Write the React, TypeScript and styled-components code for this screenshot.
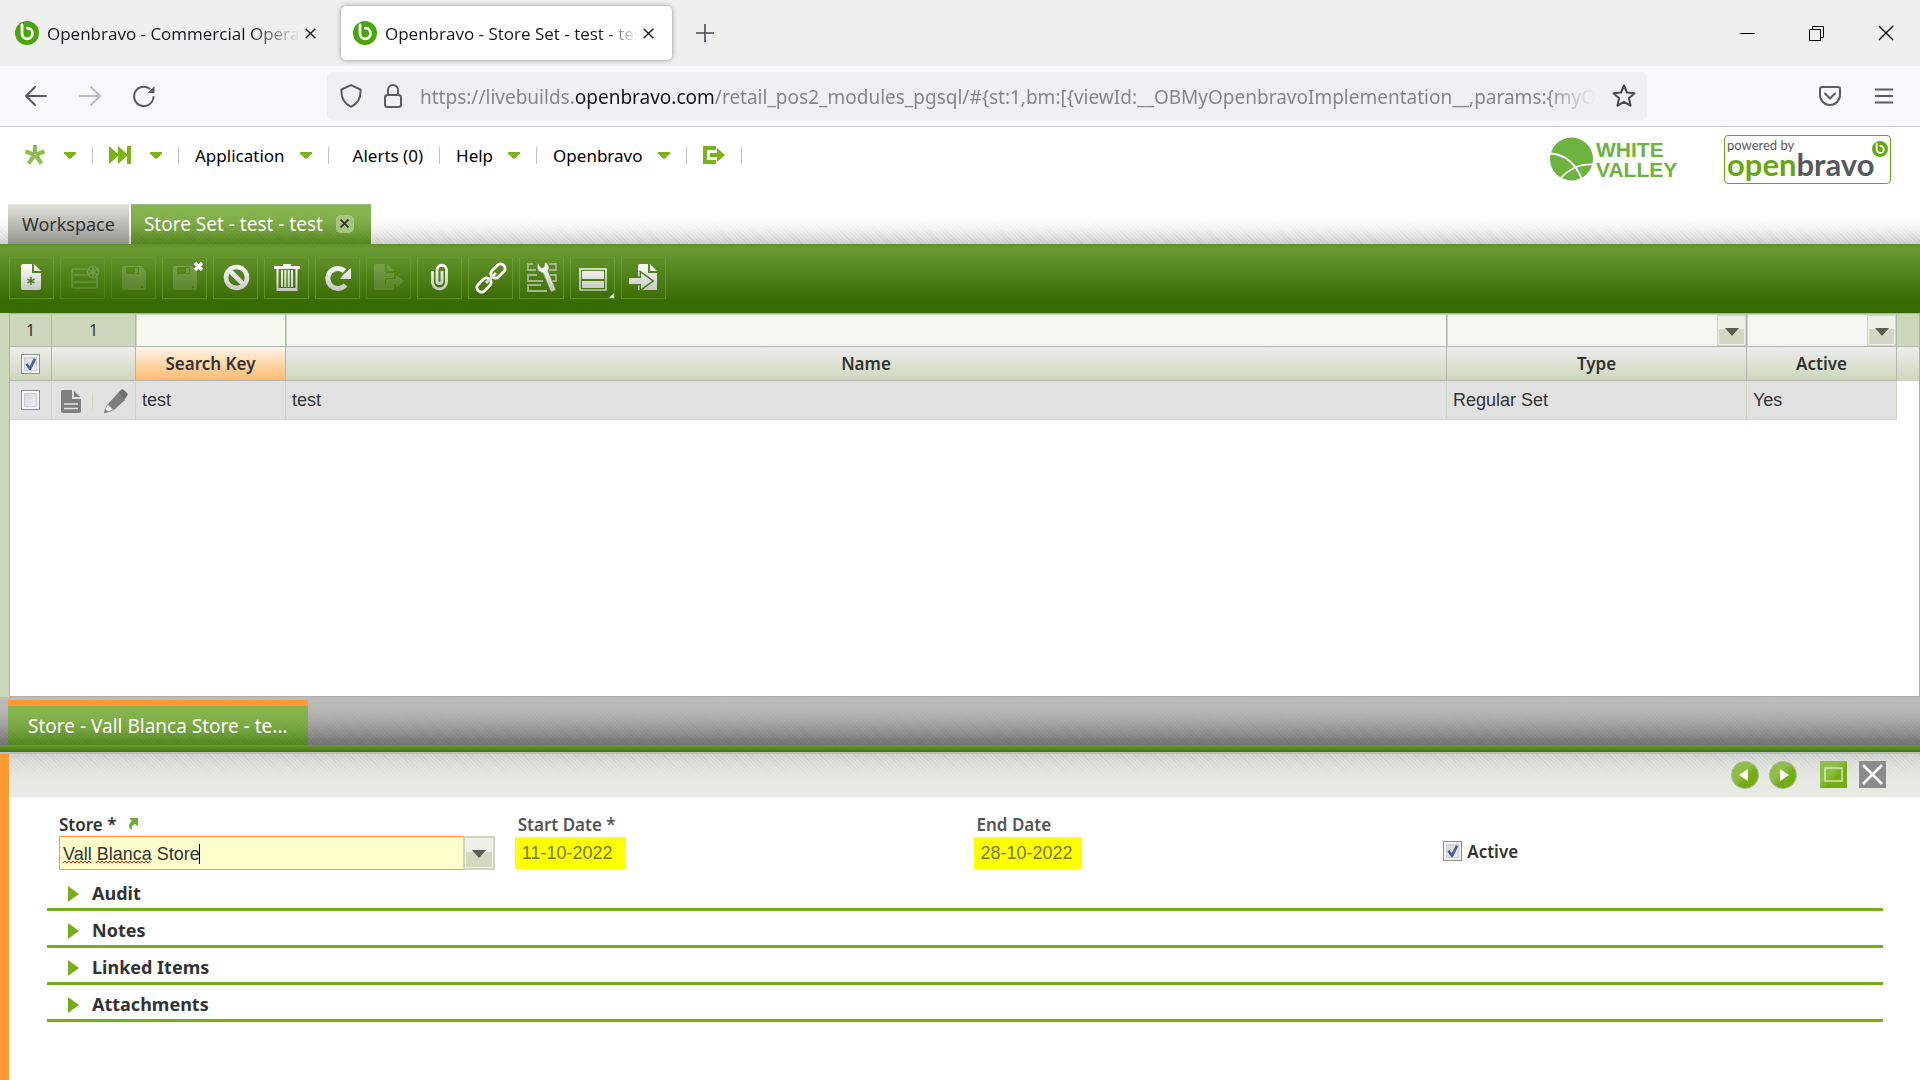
import React from 'react';
import styled, { createGlobalStyle, css } from 'styled-components';

const ui = `"Noto Sans", "Open Sans", sans-serif`;
const chrome = `"Open Sans", "Noto Sans", sans-serif`;
const arial = `"Liberation Sans", Arial, sans-serif`;

const GlobalStyle = createGlobalStyle`
  *, *::before, *::after { box-sizing: border-box; }
  html, body { margin: 0; background: #fff; }
  body { font-family: ${ui}; font-size: 16px; color: #333; }
  button, input { font: inherit; color: inherit; }
  button { border: 0; padding: 0; background: none; cursor: pointer; }
  svg { display: block; flex: none; }
`;

const Page = styled.div`
  display: flex;
  flex-direction: column;
  min-height: 100vh;
`;

/* ---------- browser window ---------- */

const TabStrip = styled.header`
  display: flex;
  align-items: center;
  height: 66px;
  padding-left: 3px;
  background: #efefef;
  font-family: ${chrome};
  font-size: 17px;
  color: #15141a;
`;

const BrowserTab = styled.div<{ $active?: boolean }>`
  display: flex;
  align-items: center;
  width: 331px;
  height: 54px;
  margin-right: 7px;
  padding: 0 18px 0 12px;
  border-radius: 5px;
  ${(p) => p.$active && css`
    background: #fff;
    box-shadow: 0 0 5px rgba(0, 0, 0, 0.4);
  `}
`;

const TabTitle = styled.span<{ $fade: number }>`
  flex: 1;
  min-width: 0;
  margin: 0 4px 0 8px;
  overflow: hidden;
  white-space: nowrap;
  mask-image: linear-gradient(to left, transparent, #000 ${(p) => p.$fade}px);
`;

const IconButton = styled.button`
  display: flex;
  align-items: center;
  justify-content: center;
`;

const PlainButton = styled(IconButton)`
  width: 54px;
  height: 48px;
`;

const NewTabButton = styled(IconButton)`
  width: 52px;
  height: 48px;
`;

const WindowControls = styled.div`
  display: flex;
  margin-left: auto;
`;

const WindowButton = styled(IconButton)`
  width: 69px;
  height: 66px;
`;

const NavBar = styled.nav`
  display: flex;
  align-items: center;
  height: 61px;
  padding: 0 9px;
  background: #f9f9fb;
  border-bottom: 1px solid #ccccd1;
`;

const UrlBar = styled.div`
  display: flex;
  align-items: center;
  flex: 1;
  gap: 16px;
  min-width: 0;
  height: 48px;
  margin: 0 156px;
  padding: 0 11px 0 13px;
  border-radius: 5px;
  background: #f0f0f4;
`;

const SiteIcons = styled.div`
  display: flex;
  gap: 22px;
`;

const UrlText = styled.div`
  flex: 1;
  min-width: 0;
  padding: 2px 0 0 2px;
  overflow: hidden;
  white-space: nowrap;
  font-family: ${ui};
  font-size: 19px;
  line-height: 28px;
  color: #87868c;
  mask-image: linear-gradient(to left, transparent, #000 50px);
  b { font-weight: 400; color: #15141a; }
`;

/* ---------- application header ---------- */

const AppHeader = styled.header`
  display: flex;
  justify-content: space-between;
  height: 77px;
  padding: 8px 29px 0 25px;
`;

const MenuRow = styled.nav`
  display: flex;
  align-items: center;
  gap: 16px;
  height: 40px;
  font-size: 17px;
  color: #000;
`;

const Sep = styled.i`
  width: 1px;
  height: 17px;
  background: #c2c2c2;
`;

const MenuButton = styled.button<{ $indent?: boolean; $icon?: boolean }>`
  display: flex;
  align-items: center;
  gap: ${(p) => (p.$icon ? 19 : 15)}px;
  margin-left: ${(p) => (p.$indent ? 8 : 0)}px;
  white-space: nowrap;
`;

const Logos = styled.div`
  display: flex;
  gap: 48px;
`;

const WhiteValley = styled.div`
  display: flex;
  gap: 3px;
  padding-top: 2px;
  color: #6cb33f;
  font-family: ${arial};
  font-size: 21px;
  font-weight: 700;
  line-height: 20px;
`;

const ValleyWords = styled.div`
  padding-top: 3px;
  width: 80px;
`;

const PoweredBox = styled.div`
  position: relative;
  width: 167px;
  height: 49px;
  padding-left: 2px;
  border: 1px solid #66a80f;
  border-radius: 4px;
  white-space: nowrap;
`;

const PoweredBy = styled.div`
  font-family: Lato, sans-serif;
  font-size: 13px;
  line-height: 18px;
  color: #55595c;
`;

const Wordmark = styled.div`
  font-family: Lato, sans-serif;
  font-size: 31px;
  font-weight: 700;
  line-height: 20px;
  color: #55595c;
  span { color: #66a80f; }
`;

const BadgeSpot = styled.div`
  position: absolute;
  top: 5px;
  right: 2px;
`;

const hatch = 'repeating-linear-gradient(45deg, rgba(0,0,0,0.05) 0 1px, transparent 1px 3px)';

const ViewTabs = styled.div`
  display: flex;
  gap: 2px;
  height: 40px;
  padding-left: 8px;
  background:
    linear-gradient(#fff 25%, rgba(255, 255, 255, 0) 100%),
    ${hatch},
    linear-gradient(#fff 30%, #cfcfcf);
`;

const ViewTab = styled.button<{ $active?: boolean }>`
  display: flex;
  align-items: center;
  gap: 13px;
  padding: 0 14px 2px;
  font-size: 18px;
  line-height: 24px;
  white-space: nowrap;
  color: ${(p) => (p.$active ? '#fff' : '#333')};
  background: ${(p) => p.$active
    ? `linear-gradient(#87b650, rgba(135,182,80,0) 90%), ${hatch}, linear-gradient(#87b650, #588a24)`
    : 'linear-gradient(#dfe1da, #93968e)'};
  border-top: 1px solid ${(p) => (p.$active ? '#9dbb7c' : '#e7e9e2')};
  ${(p) => p.$active && css`
    padding: 0 17px 2px 13px;
    font-size: 19px;
  `}
`;

const TabClose = styled.span`
  display: flex;
  align-items: center;
  justify-content: center;
  width: 18px;
  height: 18px;
  border-radius: 5px;
  background: #a3c77c;
`;

const Toolbar = styled.div`
  display: flex;
  gap: 6px;
  height: 69px;
  padding: 13px 9px;
  background: linear-gradient(#5d8f28 0, #6a9b33 4px, #376a00 58px, #376a00);
`;

const ToolButton = styled.button`
  width: 45px;
  height: 42px;
  border: 1px solid rgba(125, 175, 70, 0.5);
  border-top-color: rgba(125, 175, 70, 0.2);
  &:disabled { border-color: rgba(125, 175, 70, 0.28); }
  svg { margin: -1px; }
`;

/* ---------- grid ---------- */

const GridArea = styled.section`
  display: flex;
  flex: 1;
  min-height: 200px;
  padding-left: 9px;
  background: #cdd7bb;
`;

const GridFrame = styled.div`
  flex: 1;
  min-width: 0;
  background: #fff;
  border: 1px solid #aeb0aa;
`;

const Table = styled.table`
  width: 100%;
  table-layout: fixed;
  border-collapse: separate;
  border-spacing: 0;
  td, th { padding: 0; }
`;

const FilterRow = styled.tr`
  height: 33px;
  background: #cdd7bb;
  td {
    border-right: 1px solid #b3b5b0;
    border-bottom: 1px solid #b3b5b0;
    text-align: center;
    font-size: 16px;
  }
  td:last-child { border-right: 0; }
`;

const FilterCell = styled.div`
  display: flex;
  height: 32px;
  padding: 1px 0 0 1px;
`;

const FilterInput = styled.input`
  flex: 1;
  min-width: 0;
  border: 0;
  padding: 0 5px;
  background: #f5f8f0;
  font-family: ${arial};
  font-size: 18px;
`;

const Picker = styled.button<{ $large?: boolean }>`
  display: flex;
  align-items: center;
  justify-content: center;
  flex: none;
  width: ${(p) => (p.$large ? 32 : 29)}px;
  padding-top: 2px;
  border: ${(p) => (p.$large ? 2 : 1)}px solid #cdd7bb;
  box-shadow: inset 0 0 0 1px #eef1e7;
  background: linear-gradient(#eff1e9 45%, #d3d9c1 45%, #d3d9c1);
`;

const HeadRow = styled.tr`
  height: 34px;
  background: linear-gradient(#ededec, #cdd7bb);
  th {
    border-right: 1px solid #b3b5b0;
    border-bottom: 1px solid #b3b5b0;
    font-size: 17px;
    font-weight: 600;
    line-height: 24px;
  }
  th:last-child { border-right: 0; border-bottom: 0; }
`;

const SortedTh = styled.th`
  background: linear-gradient(#fff5ea, #ffba6e);
`;

const DataRow = styled.tr`
  height: 39px;
  font-family: ${arial};
  font-size: 18px;
  td {
    background: #e1e1e1;
    border-right: 1px solid #cdd7bb;
    border-bottom: 1px solid #cdd7bb;
    padding-left: 6px;
  }
  td:nth-child(-n + 2) { padding-left: 0; }
  td:last-child { background: #fff; border: 0; }
`;

const RowActions = styled.div`
  display: flex;
  align-items: center;
  gap: 11px;
  padding: 2px 0 0 9px;
`;

const RowSep = styled.i`
  width: 1px;
  height: 16px;
  background: #cdd7bb;
`;

const tick = `url("data:image/svg+xml,%3Csvg xmlns='http://www.w3.org/2000/svg' viewBox='0 0 19 19'%3E%3Cpath d='M5.500 9l3.500 5 5-10' fill='none' stroke='%234a5e9e' stroke-width='2.600'/%3E%3C/svg%3E")`;

const Check = styled.input.attrs({ type: 'checkbox' })`
  appearance: none;
  display: block;
  width: 19px;
  height: 20px;
  margin: 0;
  border: 1px solid #8e8f8f;
  box-shadow: inset 0 0 0 2px #f4f4f4, inset 0 0 0 3px #cbcfd5;
  background: linear-gradient(135deg, #ccd0d6, #f6f6f6);
  &:checked { background: ${tick} center / 19px no-repeat, linear-gradient(135deg, #ccd0d6, #f6f6f6); }
`;

const CheckSpot = styled.div`
  display: flex;
  justify-content: center;
`;

/* ---------- detail pane ---------- */

const ChildTabs = styled.div`
  display: flex;
  height: 48px;
  padding: 3px 0 0 8px;
  background:
    linear-gradient(#bcbcbb, rgba(188, 188, 187, 0) 90%),
    ${hatch},
    linear-gradient(#bcbcbb, #777);
`;

const ChildTab = styled.button`
  width: 300px;
  padding: 0 20px;
  border-top: 6px solid #ff9933;
  text-align: left;
  font-size: 19px;
  line-height: 24px;
  white-space: nowrap;
  color: #fff;
  background:
    linear-gradient(#87b650, rgba(135, 182, 80, 0) 90%),
    ${hatch},
    linear-gradient(#87b650, #588a24);
`;

const GreenRule = styled.div`
  height: 9px;
  background: linear-gradient(#6a9b33, #44760f);
  border-bottom: 2px solid #bcbfc0;
`;

const Detail = styled.section`
  min-height: 326px;
  border-left: 9px solid #ff9933;
`;

const DetailBar = styled.div`
  display: flex;
  align-items: center;
  justify-content: flex-end;
  height: 43px;
  padding: 0 34px 2px 0;
  gap: 12px;
  background:
    linear-gradient(rgba(231, 234, 227, 0), #e7eae3 70%),
    ${hatch},
    linear-gradient(#d2d5d1, #e7eae3 60%);
`;

const RoundPair = styled.div`
  display: flex;
  gap: 10px;
  margin-right: 11px;
`;

const Fields = styled.form`
  display: grid;
  grid-template-columns: repeat(4, 1fr);
  height: 77px;
  padding: 15px 26px 0 50px;
`;

const Field = styled.div`
  display: flex;
  flex-direction: column;
`;

const Label = styled.label<{ $muted?: boolean }>`
  display: flex;
  align-items: center;
  gap: 12px;
  height: 24px;
  font-size: 17px;
  font-weight: 600;
  color: ${(p) => (p.$muted ? '#555' : '#333')};
`;

const Combo = styled.div`
  position: relative;
  display: flex;
  width: 436px;
  height: 34px;
`;

const ComboInput = styled.input`
  flex: 1;
  min-width: 0;
  padding: 2px 3px 0;
  border: 1px solid #ff9933;
  border-right: 0;
  outline: 0;
  background: #ffffcc;
  font-family: ${arial};
  font-size: 18px;
`;

const SpellMarks = styled.svg`
  position: absolute;
  left: 0;
  top: 0;
  pointer-events: none;
`;

const DateInput = styled.input<{ $w: number }>`
  width: ${(p) => p.$w}px;
  height: 32px;
  margin: 1px 0 0 -3px;
  padding: 0 0 0 7px;
  border: 0;
  background: #ffff00;
  font-family: ${arial};
  font-size: 18px;
  color: #7a7a12;
`;

const CheckLabel = styled.label`
  display: flex;
  align-items: center;
  gap: 5px;
  height: 24px;
  margin: 27px 0 0 8px;
  font-size: 17px;
  font-weight: 600;
`;

const Sections = styled.div`
  padding: 0 37px 0 38px;
`;

const SectionButton = styled.button`
  display: flex;
  align-items: center;
  gap: 12px;
  width: 100%;
  height: 37px;
  padding: 4px 0 0 21px;
  border-bottom: 3px solid #76ad18;
  font-size: 18px;
  font-weight: 700;
  line-height: 24px;
`;

/* ---------- drawings ---------- */

const Favicon = ({ size = 24, color = '#4aa50a' }: { size?: number; color?: string }) => (
  <svg width={size} height={size} viewBox="0 0 24 24">
    <circle cx="12" cy="12" r="12" fill={color} />
    <path d="M7 4v8.500a5.300 5.300 0 1 0 5.500-5.300" fill="none" stroke="#fff" strokeWidth="2.800" strokeLinecap="round" />
  </svg>
);

const Cross = ({ size = 11, color = '#15141a', w = 1.5 }: { size?: number; color?: string; w?: number }) => (
  <svg width={size} height={size} viewBox="0 0 12 12">
    <path d="M.7.7l10.600 10.600M11.300.7L.7 11.300" stroke={color} strokeWidth={w} />
  </svg>
);

const Caret = () => (
  <svg width="12" height="7" viewBox="0 0 12 7">
    <path d="M0 0h12v1.500L7 6.500H5L0 1.500z" fill="#7ab317" />
  </svg>
);

const DownArrow = () => (
  <svg width="14" height="8" viewBox="0 0 14 8">
    <path d="M0 0h14L7 8z" fill="#5a5f50" />
  </svg>
);

const HiddenSvg = styled.svg`
  position: absolute;
`;

const Gradients = () => (
  <HiddenSvg width="0" height="0" aria-hidden="true">
    <defs>
      <linearGradient id="steel" gradientUnits="userSpaceOnUse" x1="0" y1="7" x2="0" y2="34">
        <stop offset="0" stopColor="#fff" />
        <stop offset="1" stopColor="#c3c6c0" />
      </linearGradient>
      <linearGradient id="leaf" x1="0" y1="0" x2="1" y2="1">
        <stop offset="0.400" stopColor="#8dbf45" />
        <stop offset="0.600" stopColor="#74ad13" />
      </linearGradient>
    </defs>
  </HiddenSvg>
);

const S = 'url(#steel)';
const star = 'M0-4.500V4.500M-4-2.200L4 2.200M-4 2.200L4-2.200';

const Floppy = () => (
  <path fillRule="evenodd" fill={S} d="M13 9h17l5 5v17a2 2 0 0 1-2 2H13a2 2 0 0 1-2-2V11a2 2 0 0 1 2-2zM15 10v7h13v-7zM24 11h3v5h-3zM30 29v2h2v-2z" />
);

const tools: { label: string; off?: boolean; art: React.ReactNode }[] = [
  { label: 'New in form', art: (
    <>
      <path d="M14 7h9v9h9v15a2 2 0 0 1-2 2H14a2 2 0 0 1-2-2V9a2 2 0 0 1 2-2z" fill={S} />
      <path d="M25 7l7 7h-7z" fill={S} />
      <path d={star} transform="translate(22 24) scale(.9)" stroke="#4c7d19" strokeWidth="1.600" />
    </>
  ) },
  { label: 'New in grid', off: true, art: (
    <g fill="none" stroke="#fff" strokeWidth="1.600">
      <path d="M27 12H14a2 2 0 0 0-2 2v15a2 2 0 0 0 2 2h21a2 2 0 0 0 2-2v-9M12 18h18M12 25h25" />
      <circle cx="33" cy="15" r="5.500" />
      <path d={star} transform="translate(33 15)" />
    </g>
  ) },
  { label: 'Save', off: true, art: <Floppy /> },
  { label: 'Save and close', art: (
    <>
      <g opacity="0.200"><Floppy /></g>
      <path d="M33 6l7 7M40 6l-7 7" stroke="#fff" strokeWidth="3.400" />
    </>
  ) },
  { label: 'Undo', art: (
    <g fill="none" stroke={S} strokeWidth="4.600">
      <circle cx="23.500" cy="20.500" r="10.500" />
      <path d="M16 13l15 15" />
    </g>
  ) },
  { label: 'Delete', art: (
    <>
      <path d="M10 9h9V7h8v2h9v3H10z" fill={S} />
      <path d="M13.500 12v21h19V12M18 13v17M21.300 13v17M24.700 13v17M28 13v17" fill="none" stroke={S} strokeWidth="2" />
      <path d="M13 31h20v3H13z" fill={S} />
    </>
  ) },
  { label: 'Refresh', art: (
    <>
      <path d="M30.500 28a10 10 0 1 1-1-14" fill="none" stroke={S} strokeWidth="5" />
      <path d="M36 11v11H25l3.500-4.500z" fill={S} />
    </>
  ) },
  { label: 'Export', off: true, art: (
    <>
      <path d="M10 7h9v9h9v5h-9v6h9v4a2 2 0 0 1-2 2H10a2 2 0 0 1-2-2V9a2 2 0 0 1 2-2z" fill={S} />
      <path d="M21 7l7 7h-7zM20 22h10v-4l8 6-8 7v-4H20z" fill={S} />
    </>
  ) },
  { label: 'Attachments', art: (
    <path d="M15.500 14v11a7 7 0 0 0 14 0V13a4.700 4.700 0 0 0-9.500 0v11a2.400 2.400 0 0 0 5 0V14" fill="none" stroke={S} strokeWidth="2.800" />
  ) },
  { label: 'Linked items', art: (
    <g fill="none" stroke={S} strokeWidth="2.800">
      <rect x="-8" y="-4.500" width="16" height="9" rx="4" transform="translate(30 14) rotate(-45)" />
      <rect x="-8" y="-4.500" width="16" height="9" rx="4" transform="translate(16 28) rotate(-45)" />
      <path d="M18 26l10-10" />
    </g>
  ) },
  { label: 'Personalize form', art: (
    <>
      <path d="M14 7H9v6h8M30 7h7v6h-7M18 18H9v6h15M31 18h6v6h-5M22 28H9v6h19" fill="none" stroke="#a4b78d" strokeWidth="1.800" />
      <path d="M19 6c-2 5 0 9 5 10l8 19 5-2-8-19c2-3 1-7-3-9l-1 5-3 1z" fill={S} stroke="#55842a" strokeWidth=".6" />
    </>
  ) },
  { label: 'Layout', art: (
    <>
      <path d="M10 12h26v21H10z" fill="none" stroke={S} strokeWidth="1.600" />
      <path d="M12 14h22v8H12zM12 24h22v7H12z" fill={S} />
      <path d="M44 36v5h-5z" fill="#fff" />
    </>
  ) },
  { label: 'Direct navigation', art: (
    <>
      <path d="M19 7h8v9h9v17H17V9a2 2 0 0 1 2-2zM29 7l7 7h-7z" fill={S} />
      <path d="M8 21h12v-5l11 8-11 8v-5H8z" fill={S} stroke="#4c7d19" strokeWidth="3" paintOrder="stroke" />
    </>
  ) },
];

const wave = (x: number, end: number) => {
  let d = `M${x} 27`;
  for (let i = x, up = false; i < end; i += 2, up = !up) d += `l2 ${up ? 2 : -2}`;
  return d;
};

const Play = () => (
  <svg width="12" height="18" viewBox="0 0 12 18"><path d="M0 2l11 8-11 8z" fill="#76ad18" /></svg>
);

const noop = () => {};

export default function App() {
  return (
    <Page>
      <GlobalStyle />
      <Gradients />
      <TabStrip>
        <BrowserTab>
          <Favicon />
          <TabTitle $fade={50}>Openbravo - Commercial Operations</TabTitle>
          <IconButton aria-label="Close tab"><Cross /></IconButton>
        </BrowserTab>
        <BrowserTab $active>
          <Favicon />
          <TabTitle $fade={40}>Openbravo - Store Set - test - test</TabTitle>
          <IconButton aria-label="Close tab"><Cross /></IconButton>
        </BrowserTab>
        <NewTabButton aria-label="New tab">
          <svg width="18" height="18"><path d="M9 0v18M0 9h18" stroke="#4a4953" strokeWidth="1.600" /></svg>
        </NewTabButton>
        <WindowControls>
          <WindowButton aria-label="Minimize">
            <svg width="15" height="15"><path d="M0 7.500h15" stroke="#000" /></svg>
          </WindowButton>
          <WindowButton aria-label="Restore">
            <svg width="15" height="15" fill="none" stroke="#000"><path d="M.5 3.500h11v11H.5zM3.500 3.500v-3h11v11h-3" /></svg>
          </WindowButton>
          <WindowButton aria-label="Close window"><Cross size={16} color="#000" w={1} /></WindowButton>
        </WindowControls>
      </TabStrip>

      <NavBar>
        <PlainButton aria-label="Back">
          <svg width="22" height="20" fill="none" stroke="#5b5b66" strokeWidth="2" strokeLinecap="round" strokeLinejoin="round"><path d="M21 10H1M10 1L1 10l9 9" /></svg>
        </PlainButton>
        <PlainButton aria-label="Forward">
          <svg width="22" height="20" fill="none" stroke="#bdbdc4" strokeWidth="2" strokeLinecap="round" strokeLinejoin="round"><path d="M1 10h20M12 1l9 9-9 9" /></svg>
        </PlainButton>
        <PlainButton aria-label="Reload">
          <svg width="22" height="22" fill="none" stroke="#5b5b66" strokeWidth="2" strokeLinecap="round"><path d="M20.500 12A9.700 9.700 0 1 1 16.500 3.500" /><path d="M21.500 1v7h-7z" fill="#5b5b66" stroke="none" /></svg>
        </PlainButton>
        <UrlBar>
          <SiteIcons>
            <svg width="22" height="24" fill="none" stroke="#5b5b66" strokeWidth="2" strokeLinejoin="round"><path d="M11 1.200l9.500 4.300c.5 8-3 14.500-9.500 17.300C4.500 20 1 13.500 1.500 5.500z" /></svg>
            <svg width="18" height="24" fill="none" stroke="#5b5b66" strokeWidth="2"><rect x="1" y="11" width="16" height="12" rx="2.500" /><path d="M4 11V6a5 5 0 0 1 10 0v5" /></svg>
          </SiteIcons>
          <UrlText>https://livebuilds.<b>openbravo.com</b>/retail_pos2_modules_pgsql/#{'{'}st:1,bm:[{'{'}viewId:__OBMyOpenbravoImplementation__,params:{'{'}myOB</UrlText>
          <IconButton aria-label="Bookmark this page">
            <svg width="24" height="24" viewBox="0 0 24 24" fill="none" stroke="#4a4953" strokeWidth="2" strokeLinejoin="round"><path d="M12 1.500l3 7 7.500.7-5.600 5 1.700 7.500L12 17.800l-6.600 3.900 1.700-7.500-5.600-5 7.500-.7z" /></svg>
          </IconButton>
        </UrlBar>
        <PlainButton aria-label="Save to Pocket">
          <svg width="22" height="20" fill="none" stroke="#5b5b66" strokeWidth="2" strokeLinecap="round" strokeLinejoin="round"><path d="M3 1h16a2 2 0 0 1 2 2v6a10 10 0 0 1-20 0V3a2 2 0 0 1 2-2zM6 7.500l5 5 5-5" /></svg>
        </PlainButton>
        <PlainButton aria-label="Open menu">
          <svg width="18" height="16" stroke="#5b5b66" strokeWidth="2"><path d="M0 1.500h18M0 8h18M0 14.500h18" /></svg>
        </PlainButton>
      </NavBar>

      <AppHeader>
        <MenuRow>
          <MenuButton $icon aria-label="Quick create">
            <svg width="20" height="20" viewBox="-10 -10 20 20" stroke="#8cbf4d" strokeWidth="4"><path d="M0-10v9M-9.500-3.500l8.500 3M9.500-3.500l-8.500 3M-6.500 8.500L-.5 0M6.500 8.500L.5 0" /></svg>
            <Caret />
          </MenuButton>
          <Sep />
          <MenuButton $icon aria-label="Quick launch">
            <svg width="22" height="18" viewBox="0 0 22 18" fill="#7ab317"><path d="M0 0l9 8V0l9 8V0h4v18h-4v-8l-9 8v-8l-9 8z" /></svg>
            <Caret />
          </MenuButton>
          <Sep />
          <MenuButton>Application<Caret /></MenuButton>
          <Sep />
          <MenuButton $indent>Alerts (0)</MenuButton>
          <Sep />
          <MenuButton>Help<Caret /></MenuButton>
          <Sep />
          <MenuButton>Openbravo<Caret /></MenuButton>
          <Sep />
          <MenuButton aria-label="Log out">
            <svg width="22" height="18" viewBox="0 0 22 18" fill="#7ab317"><path d="M0 0h13v4H4v10h9v4H0z" /><path d="M7 7h7V2l8 7-8 7v-5H7z" /></svg>
          </MenuButton>
          <Sep />
        </MenuRow>
        <Logos>
          <WhiteValley>
            <svg width="43" height="44" viewBox="0 0 43 44">
              <circle cx="21.500" cy="22" r="21.500" fill="#6cb33f" />
              <path d="M0 16.500C14 17 26 26 32 43M43 27.500C29 27 19 32 11 41" fill="none" stroke="#fff" strokeWidth="1.800" />
            </svg>
            <ValleyWords>WHITE<br />VALLEY</ValleyWords>
          </WhiteValley>
          <PoweredBox>
            <PoweredBy>powered by</PoweredBy>
            <Wordmark><span>open</span>bravo</Wordmark>
            <BadgeSpot><Favicon size={16} color="#66a80f" /></BadgeSpot>
          </PoweredBox>
        </Logos>
      </AppHeader>

      <ViewTabs>
        <ViewTab>Workspace</ViewTab>
        <ViewTab $active>Store Set - test - test<TabClose><Cross size={9} color="#333" w={2.4} /></TabClose></ViewTab>
      </ViewTabs>
      <Toolbar>
        {tools.map((t) => (
          <ToolButton key={t.label} aria-label={t.label} disabled={t.off}>
            <svg width="45" height="42" viewBox="0 0 45 42"><g opacity={t.off ? 0.17 : 1}>{t.art}</g></svg>
          </ToolButton>
        ))}
      </Toolbar>

      <GridArea>
        <GridFrame>
          <Table>
            <colgroup>
              <col style={{ width: 42 }} /><col style={{ width: 84 }} /><col style={{ width: 150 }} /><col />
              <col style={{ width: 300 }} /><col style={{ width: 150 }} /><col style={{ width: 22 }} />
            </colgroup>
            <thead>
              <FilterRow>
                <td>1</td>
                <td>1</td>
                <td><FilterCell><FilterInput aria-label="Filter search key" /></FilterCell></td>
                <td><FilterCell><FilterInput aria-label="Filter name" /></FilterCell></td>
                <td><FilterCell><FilterInput aria-label="Filter type" /><Picker aria-label="Pick type"><DownArrow /></Picker></FilterCell></td>
                <td><FilterCell><FilterInput aria-label="Filter active" /><Picker aria-label="Pick active"><DownArrow /></Picker></FilterCell></td>
                <td />
              </FilterRow>
              <HeadRow>
                <th><CheckSpot><Check aria-label="Select all" checked onChange={noop} /></CheckSpot></th>
                <th />
                <SortedTh>Search Key</SortedTh>
                <th>Name</th>
                <th>Type</th>
                <th>Active</th>
                <th />
              </HeadRow>
            </thead>
            <tbody>
              <DataRow>
                <td><CheckSpot><Check aria-label="Select test" /></CheckSpot></td>
                <td>
                  <RowActions>
                    <IconButton aria-label="Edit in form">
                      <svg width="20" height="23" viewBox="0 0 20 23">
                        <path d="M2 0h9v9h9v12a2 2 0 0 1-2 2H2a2 2 0 0 1-2-2V2a2 2 0 0 1 2-2zM13 1l6 6h-6z" fill="#7e7e7e" />
                        <path d="M3 14h14M3 18.500h14" stroke="#e1e1e1" strokeWidth="1.600" />
                      </svg>
                    </IconButton>
                    <RowSep />
                    <IconButton aria-label="Edit in grid">
                      <svg width="24" height="24" viewBox="0 0 24 24">
                        <path d="M14 4l3-3c1-1 2-1 3 0l3 3c1 1 1 2 0 3l-3 4z" fill="#6e6e6e" />
                        <path d="M14 4l7 7L10 21l-4-1-2-5z" fill="#7e7e7e" />
                        <path d="M3.500 15l6 6L0 24z" fill="#f4f4f4" stroke="#8a8a8a" strokeWidth=".8" />
                        <path d="M0 24l1.500-4 2.500 3z" fill="#7e7e7e" />
                      </svg>
                    </IconButton>
                  </RowActions>
                </td>
                <td>test</td>
                <td>test</td>
                <td>Regular Set</td>
                <td>Yes</td>
                <td />
              </DataRow>
            </tbody>
          </Table>
        </GridFrame>
      </GridArea>

      <ChildTabs><ChildTab>Store - Vall Blanca Store - te...</ChildTab></ChildTabs>
      <GreenRule />
      <Detail>
        <DetailBar>
          <RoundPair>
            <IconButton aria-label="Previous record">
              <svg width="28" height="28"><circle cx="14" cy="14" r="13.500" fill="url(#leaf)" stroke="#a9b79a" /><path d="M17 8v12l-9-6z" fill="#fff" /></svg>
            </IconButton>
            <IconButton aria-label="Next record">
              <svg width="28" height="28"><circle cx="14" cy="14" r="13.500" fill="url(#leaf)" stroke="#a9b79a" /><path d="M11 8v12l9-6z" fill="#fff" /></svg>
            </IconButton>
          </RoundPair>
          <IconButton aria-label="Maximize">
            <svg width="27" height="27"><path d="M0 0h27v27H0z" fill="url(#leaf)" /><path d="M5 7h17v13H5z" fill="none" stroke="#d3e8b2" strokeWidth="1.600" /></svg>
          </IconButton>
          <IconButton aria-label="Close record">
            <svg width="27" height="27"><path d="M0 0h27v27H0z" fill="#8b8b8b" /><path d="M4 4l19 19M23 4L4 23" stroke="#fff" strokeWidth="2.600" /></svg>
          </IconButton>
        </DetailBar>
        <Fields>
          <Field>
            <Label htmlFor="store">
              Store *
              <svg width="10" height="12" viewBox="0 0 10 12" fill="#6cab3a"><path d="M1 0h9v8L7 6c-3 1-4 3-3 6C0 10 0 6 4 3z" /></svg>
            </Label>
            <Combo>
              <ComboInput id="store" defaultValue="Vall Blanca Store" spellCheck={false} />
              <SpellMarks width="160" height="34" aria-hidden="true">
                <path d={wave(4, 31)} fill="none" stroke="#f00" />
                <path d={wave(37, 91)} fill="none" stroke="#f00" />
                <path d="M140.500 8v20" stroke="#000" />
              </SpellMarks>
              <Picker type="button" $large aria-label="Pick store"><DownArrow /></Picker>
            </Combo>
          </Field>
          <Field>
            <Label $muted htmlFor="start">Start Date *</Label>
            <DateInput id="start" $w={111} defaultValue="11-10-2022" />
          </Field>
          <Field>
            <Label $muted htmlFor="end">End Date</Label>
            <DateInput id="end" $w={108} defaultValue="28-10-2022" />
          </Field>
          <Field>
            <CheckLabel><Check checked onChange={noop} />Active</CheckLabel>
          </Field>
        </Fields>
        <Sections>
          {['Audit', 'Notes', 'Linked Items', 'Attachments'].map((s) => (
            <SectionButton key={s}><Play />{s}</SectionButton>
          ))}
        </Sections>
      </Detail>
    </Page>
  );
}
